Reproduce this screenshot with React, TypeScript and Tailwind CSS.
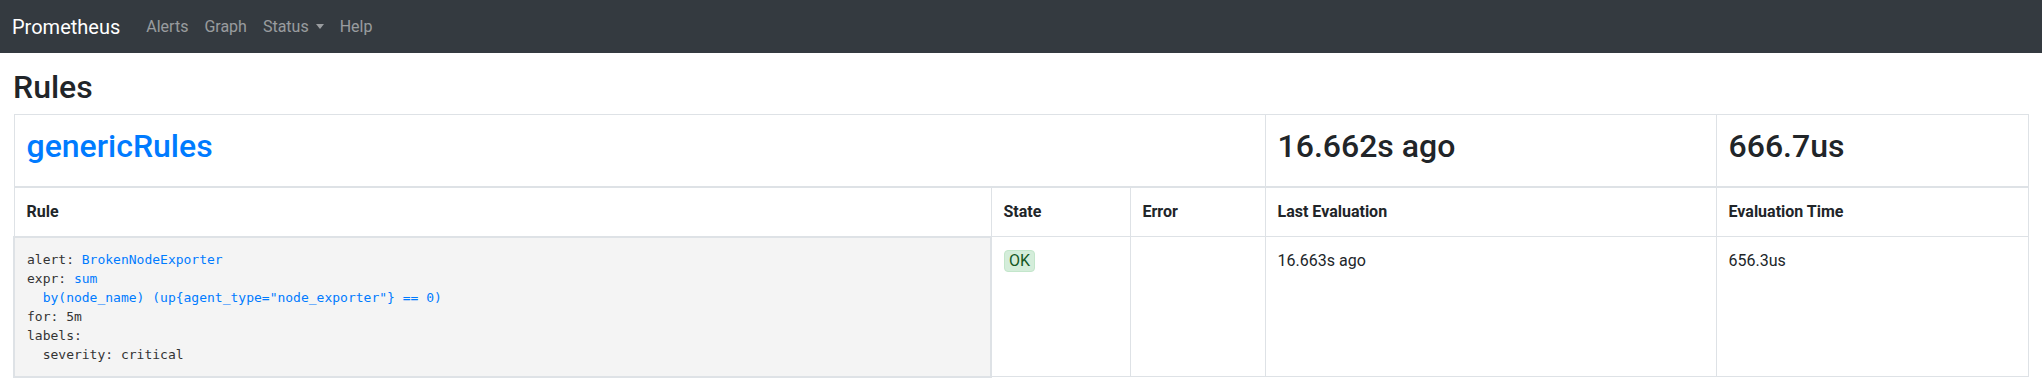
import React from 'react';

const navLinks = ['Alerts', 'Graph', 'Status', 'Help'];

const Caret: React.FC = () => (
  <span className="ml-[7px] inline-block h-0 w-0 border-x-[4.5px] border-t-[5px] border-x-transparent border-t-current align-[3px]" />
);

const cell = 'border border-[#dee2e6] p-3 align-top';
const blue = 'text-[#007bff]';

export default function App() {
  return (
    <div className="min-h-screen bg-white font-['Roboto','Liberation_Sans',sans-serif] text-base text-[#212529]">
      <nav className="flex h-[53px] items-center bg-[#343a40] pl-3">
        <a href="#" className="mr-[18px] text-[20px] leading-[30px] text-white">
          Prometheus
        </a>
        <ul className="flex">
          {navLinks.map((l) => (
            <li key={l}>
              <a href="#" className="px-2 leading-6 text-white/50">
                {l}
                {l === 'Status' && <Caret />}
              </a>
            </li>
          ))}
        </ul>
      </nav>

      <div className="px-[13px]">
        <h2 className="mt-[15px] mb-2 text-[32px] font-medium leading-[1.2]">Rules</h2>

        <table className="w-full table-fixed border-collapse">
          <colgroup>
            <col className="w-[977px]" />
            <col className="w-[139px]" />
            <col className="w-[135px]" />
            <col className="w-[451px]" />
            <col />
          </colgroup>
          <thead>
            <tr>
              <td colSpan={3} className={`${cell} border-b-2`}>
                <a href="#genericRules">
                  <h2 id="genericRules" className={`mb-2 text-[32px] font-medium leading-[1.2] ${blue}`}>
                    genericRules
                  </h2>
                </a>
              </td>
              <td className={`${cell} border-b-2`}>
                <h2 className="mb-2 text-[32px] font-medium leading-[1.2]">16.662s ago</h2>
              </td>
              <td className={`${cell} border-b-2`}>
                <h2 className="mb-2 text-[32px] font-medium leading-[1.2]">666.7us</h2>
              </td>
            </tr>
          </thead>
          <tbody>
            <tr className="font-bold leading-6">
              <td className={cell}>Rule</td>
              <td className={cell}>State</td>
              <td className={cell}>Error</td>
              <td className={cell}>Last Evaluation</td>
              <td className={cell}>Evaluation Time</td>
            </tr>
            <tr className="leading-6">
              <td className="border-2 border-[#dee2e6] bg-[#f4f4f4] p-3 align-top">
                <pre className="font-['DejaVu_Sans_Mono',monospace] text-[13px] leading-[19px] text-[#333]">
                  {'alert: '}
                  <span className={blue}>BrokenNodeExporter</span>
                  {'\nexpr: '}
                  <span className={blue}>sum</span>
                  {'\n  '}
                  <span className={blue}>{'by(node_name) (up{agent_type="node_exporter"} == 0)'}</span>
                  {'\nfor: 5m\nlabels:\n  severity: critical'}
                </pre>
              </td>
              <td className={cell}>
                <span className="inline-block rounded border border-[#c3e6cb] bg-[#d4edda] px-1 leading-5 text-[#155724]">
                  OK
                </span>
              </td>
              <td className={cell}></td>
              <td className={cell}>16.663s ago</td>
              <td className={cell}>656.3us</td>
            </tr>
          </tbody>
        </table>
      </div>
    </div>
  );
}
